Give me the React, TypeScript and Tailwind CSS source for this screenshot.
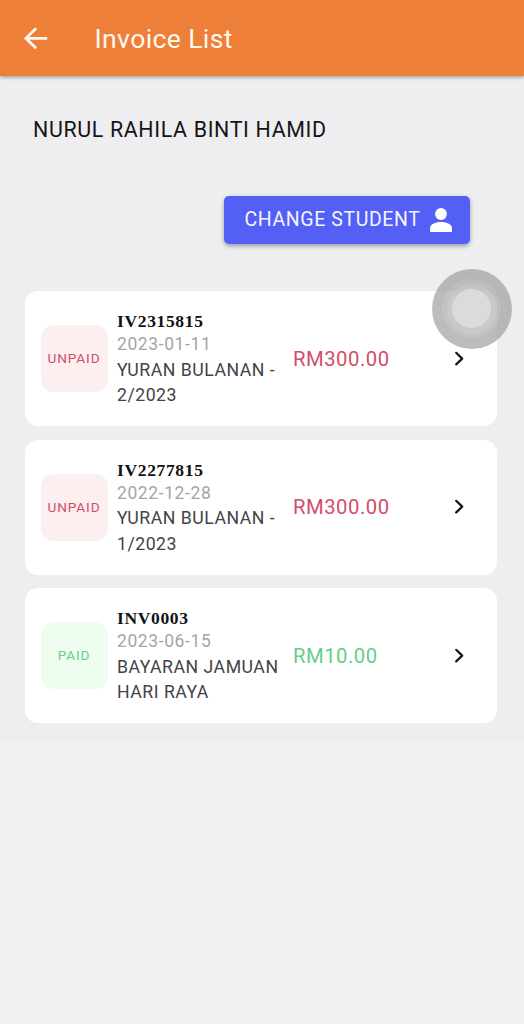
import React from 'react';

type Invoice = {
  number: string
  date: string
  description: string
  amount: string
  paid: boolean
}

const invoices: Invoice[] = [
  { number: 'IV2315815', date: '2023-01-11', description: 'YURAN BULANAN - 2/2023', amount: 'RM300.00', paid: false },
  { number: 'IV2277815', date: '2022-12-28', description: 'YURAN BULANAN - 1/2023', amount: 'RM300.00', paid: false },
  { number: 'INV0003', date: '2023-06-15', description: 'BAYARAN JAMUAN HARI RAYA', amount: 'RM10.00', paid: true },
]

const InvoiceCard: React.FC<{ invoice: Invoice }> = ({ invoice }) => {
  const { number, date, description, amount, paid } = invoice

  return (
    <li className="flex h-[135px] items-center rounded-[13px] bg-white pl-4">
      <div
        className={`flex size-[67px] shrink-0 items-center justify-center rounded-[13px] pr-px pb-px text-[13.6px] tracking-[0.9px] ${
          paid ? 'bg-[#effdf1] text-[#62d086]' : 'bg-[#fceff0] text-[#d44d67]'
        }`}
      >
        {paid ? 'PAID' : 'UNPAID'}
      </div>

      <div className="ml-[9px] w-[176px] shrink-0 pt-[2px] pr-2">
        <h2 className="font-['Liberation_Serif',serif] text-[17.5px] leading-[21px] font-bold tracking-[0.65px] text-[#111113]">
          {number}
        </h2>
        <p className="text-[17.5px] leading-6 tracking-[0.6px] text-[#a5a5a8]">{date}</p>
        <p className="pt-[1.5px] text-[17.7px] leading-[25.5px] tracking-[0.5px] text-[#434346]">{description}</p>
      </div>

      <div className={`w-[159.5px] shrink-0 text-[20.3px] leading-6 tracking-[0.5px] ${paid ? 'text-[#62d086]' : 'text-[#d44d67]'}`}>
        {amount}
      </div>

      <svg className="h-4 w-3 shrink-0" viewBox="0 0 12 16" fill="none" stroke="#151517" strokeWidth="2.2" strokeLinecap="round" strokeLinejoin="round">
        <path d="M3.2 1.8l6 5.8-6 5.8" />
      </svg>
    </li>
  )
}

const App: React.FC = () => {
  return (
    <div className="relative h-[1024px] w-full overflow-hidden bg-[#f1f1f3] font-[Roboto,sans-serif]">
      <header className="relative flex h-[76px] items-center bg-[#ee7f39] pl-6 shadow-[0_1px_4px_rgba(0,0,0,0.4)]">
        <button aria-label="Back" className="shrink-0">
          <svg className="h-6 w-6" viewBox="0 0 24 24" fill="none" stroke="#fff8ef" strokeWidth="2.8">
            <path d="M23.2 12.3H2M12.1 2.3L1.9 12.3l10.2 10" />
          </svg>
        </button>
        <h1 className="ml-[46.5px] pt-px text-[26.6px] tracking-[0.35px] text-[#fff8ef]">Invoice List</h1>
      </header>

      <main className="h-[665px] bg-[#eeeef0] pr-[27px] pl-[25px]">
        <p className="pt-[38.5px] pl-2 text-[21.4px] leading-[30px] tracking-[0.65px] text-[#151517]">
          NURUL RAHILA BINTI HAMID
        </p>

        <div className="mt-[51.5px] flex justify-end pr-[27.5px]">
          <button className="flex h-12 w-[246px] items-center rounded-[5px] bg-[#545ff6] pl-[21px] text-[19.5px] tracking-[0.6px] text-[#f4f5ff] shadow-[0_2px_4px_rgba(0,0,0,0.35)]">
            <span className="w-[185.5px] pb-px text-left whitespace-nowrap">CHANGE STUDENT</span>
            <svg className="h-6 w-[22px]" viewBox="0 0 22 24" fill="#ffffff">
              <circle cx="11" cy="6" r="5.9" />
              <path d="M0 24v-3.8C0 16.4 5 14 11 14s11 2.4 11 6.2V24z" />
            </svg>
          </button>
        </div>

        <ul className="mt-[47.4px] flex flex-col gap-[13.5px]">
          {invoices.map((invoice) => (
            <InvoiceCard key={invoice.number} invoice={invoice} />
          ))}
        </ul>
      </main>

      {/* Floating touch control */}
      <div className="absolute top-[268.5px] left-[431.5px] flex size-20 items-center justify-center rounded-full bg-[#99979a]/65">
        <div className="flex size-[59px] items-center justify-center rounded-full bg-white/10">
          <div className="flex size-[50px] items-center justify-center rounded-full bg-white/10">
            <div className="size-[38.5px] rounded-full bg-[#dcdadd]" />
          </div>
        </div>
      </div>
    </div>
  )
}

export default App;
